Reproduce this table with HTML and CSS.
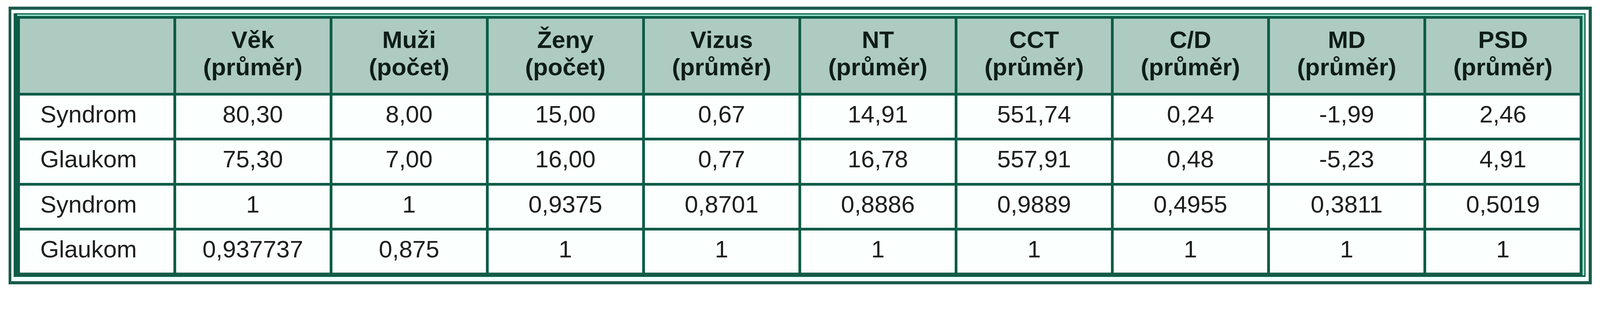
FILE: index.html
```html
<!DOCTYPE html>
<html lang="cs">
<head>
<meta charset="utf-8">
<title>Tabulka</title>
<link rel="stylesheet" href="styles.css">
</head>
<body>
<div class="outer">
  <div class="inner">
    <table class="data">
      <thead>
        <tr>
          <th class="label"></th>
          <th>Věk<br>(průměr)</th>
          <th>Muži<br>(počet)</th>
          <th>Ženy<br>(počet)</th>
          <th>Vizus<br>(průměr)</th>
          <th>NT<br>(průměr)</th>
          <th>CCT<br>(průměr)</th>
          <th>C/D<br>(průměr)</th>
          <th>MD<br>(průměr)</th>
          <th>PSD<br>(průměr)</th>
        </tr>
      </thead>
      <tbody>
        <tr>
          <td class="label">Syndrom</td>
          <td>80,30</td><td>8,00</td><td>15,00</td><td>0,67</td><td>14,91</td><td>551,74</td><td>0,24</td><td>-1,99</td><td>2,46</td>
        </tr>
        <tr>
          <td class="label">Glaukom</td>
          <td>75,30</td><td>7,00</td><td>16,00</td><td>0,77</td><td>16,78</td><td>557,91</td><td>0,48</td><td>-5,23</td><td>4,91</td>
        </tr>
        <tr>
          <td class="label">Syndrom</td>
          <td>1</td><td>1</td><td>0,9375</td><td>0,8701</td><td>0,8886</td><td>0,9889</td><td>0,4955</td><td>0,3811</td><td>0,5019</td>
        </tr>
        <tr>
          <td class="label">Glaukom</td>
          <td>0,937737</td><td>0,875</td><td>1</td><td>1</td><td>1</td><td>1</td><td>1</td><td>1</td><td>1</td>
        </tr>
      </tbody>
    </table>
  </div>
</div>
</body>
</html>
```
FILE: styles.css
```css
/* 1rem = 10 reference pixels (the frame is 4306 pixels wide) */
html {
  font-size: calc(1000vw / 4306);
}

html, body {
  margin: 0;
  padding: 0;
  background: #ffffff;
}

body {
  padding: 1.8rem 0 0 2.3rem;
  font-family: "Liberation Sans", Arial, sans-serif;
}

.outer {
  width: max-content;
  border-style: solid;
  border-color: #1b5a4d;
  border-width: 0.9rem 0.9rem 0.9rem 0.8rem;
  padding: 0.9rem 0.9rem 1.1rem 0.6rem;
  background: #f0fffd;
}

.inner {
  width: max-content;
  border-style: solid;
  border-color: #0e5c47;
  border-width: 0.4rem 0.4rem 0.5rem 1rem;
  padding: 0.5rem 0.5rem 0 0;
  background: #92dcc5;
}

.data {
  width: 421.3rem;
  table-layout: fixed;
  border-collapse: separate;
  border-spacing: 0.8rem;
  background: #0e5c47;
  margin: 0;
}

.data th,
.data td {
  width: 41.2rem;
  text-align: center;
  font-size: 6.5rem;
  line-height: 7.3rem;
  white-space: nowrap;
  overflow: hidden;
}

.data th {
  background: #adcbc1;
  color: #0f1d19;
  font-weight: bold;
  padding: 2rem 0 3.3rem;
  vertical-align: top;
}

.data td {
  background: #fbfffe;
  color: #1e1e1e;
  font-weight: normal;
  padding: 1.4rem 0 2.7rem;
  vertical-align: top;
}

.data td.label {
  text-align: left;
  padding-left: 5.5rem;
}
```
